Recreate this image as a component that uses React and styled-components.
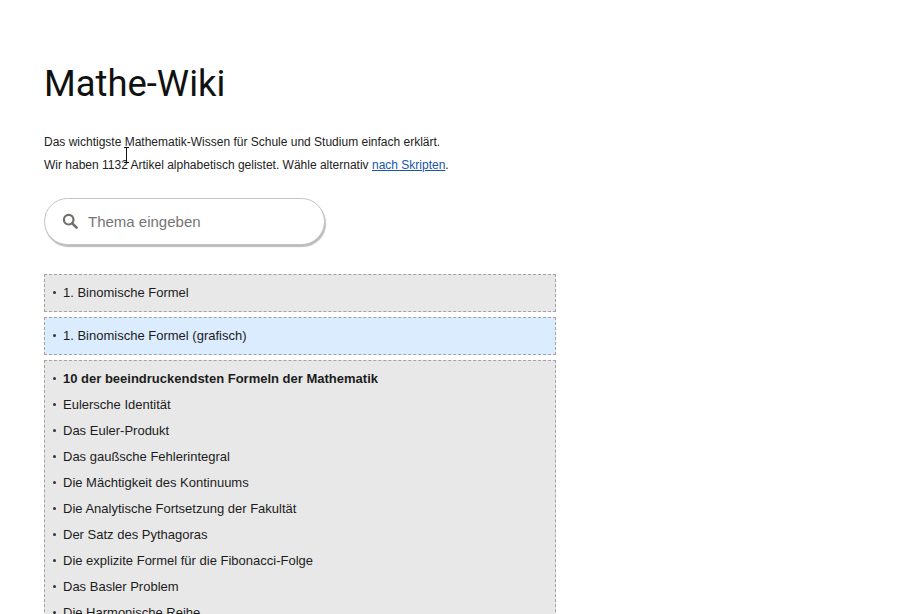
import React from 'react';
import styled, { createGlobalStyle } from 'styled-components';

const GlobalStyle = createGlobalStyle`
  html, body {
    margin: 0;
    height: 614px;
    overflow: hidden;
    background: #fff;
  }
`;

const Page = styled.main`
  position: relative;
  padding: 60px 0 0 44px;
  width: 512px;
  font-family: "Liberation Sans", Arial, sans-serif;
  color: #1a1a1a;
`;

const Title = styled.h1`
  margin: 0 0 23px;
  font-family: Roboto, sans-serif;
  font-size: 36.4px;
  font-weight: 400;
  line-height: 48px;
  color: #111;
`;

const Intro = styled.p`
  margin: 0;
  font-size: 12px;
  line-height: 23px;
  color: #222;
`;

const IntroLink = styled.a`
  color: #1a55a8;
  text-decoration: underline;
`;

const SearchBox = styled.div`
  display: flex;
  align-items: center;
  gap: 10px;
  box-sizing: border-box;
  width: 281px;
  height: 47px;
  margin: 21px 0 29px;
  padding: 0 0 1px 17px;
  border: 1px solid #c4c4c4;
  border-radius: 24px;
  box-shadow: 1px 2px 1px #bbb;
  background: #fff;
`;

const SearchText = styled.span`
  font-size: 15px;
  color: #757575;
`;

const Group = styled.ul`
  list-style: none;
  margin: 0 0 5px;
  padding: 4px 8px 6px;
  border: 1px dashed #a3a3a3;
  background: ${(props) => (props.active ? '#dbecfe' : '#e8e8e8')};
`;

const Item = styled.li`
  display: flex;
  align-items: center;
  gap: 7px;
  height: 26px;
  font-size: 13px;
  font-weight: ${(props) => (props.strong ? 700 : 400)};
  color: #1c1c1c;

  &::before {
    content: '';
    width: 3px;
    height: 3px;
    border-radius: 50%;
    background: #333;
    flex: none;
  }
`;

const Cursor = styled.svg`
  position: absolute;
  left: 122px;
  top: 147px;
`;

const SearchIcon = () => (
  <svg width="16" height="16" viewBox="0 0 16 16" fill="none">
    <circle cx="6.7" cy="6.7" r="4.8" stroke="#6f6f6a" strokeWidth="2.2" />
    <path d="M10.3 10.3 14.6 14.6" stroke="#6f6f6a" strokeWidth="2.6" strokeLinecap="round" />
  </svg>
);

const articles = [
  'Eulersche Identität',
  'Das Euler-Produkt',
  'Das gaußsche Fehlerintegral',
  'Die Mächtigkeit des Kontinuums',
  'Die Analytische Fortsetzung der Fakultät',
  'Der Satz des Pythagoras',
  'Die explizite Formel für die Fibonacci-Folge',
  'Das Basler Problem',
  'Die Harmonische Reihe',
];

const App = () => (
  <Page>
    <GlobalStyle />
    <Title>Mathe-Wiki</Title>
    <Intro>Das wichtigste Mathematik-Wissen für Schule und Studium einfach erklärt.</Intro>
    <Intro>
      Wir haben 1132 Artikel alphabetisch gelistet. Wähle alternativ{' '}
      <IntroLink href="#skripte">nach Skripten</IntroLink>.
    </Intro>
    <SearchBox>
      <SearchIcon />
      <SearchText>Thema eingeben</SearchText>
    </SearchBox>
    <Group>
      <Item>1. Binomische Formel</Item>
    </Group>
    <Group active>
      <Item>1. Binomische Formel (grafisch)</Item>
    </Group>
    <Group>
      <Item strong>10 der beeindruckendsten Formeln der Mathematik</Item>
      {articles.map((name) => (
        <Item key={name}>{name}</Item>
      ))}
    </Group>
    <Cursor width="9" height="16" viewBox="0 0 9 16">
      <path d="M2 .5h5M4.5.5v15M2 15.5h5" stroke="#111" fill="none" />
    </Cursor>
  </Page>
);

export default App;
